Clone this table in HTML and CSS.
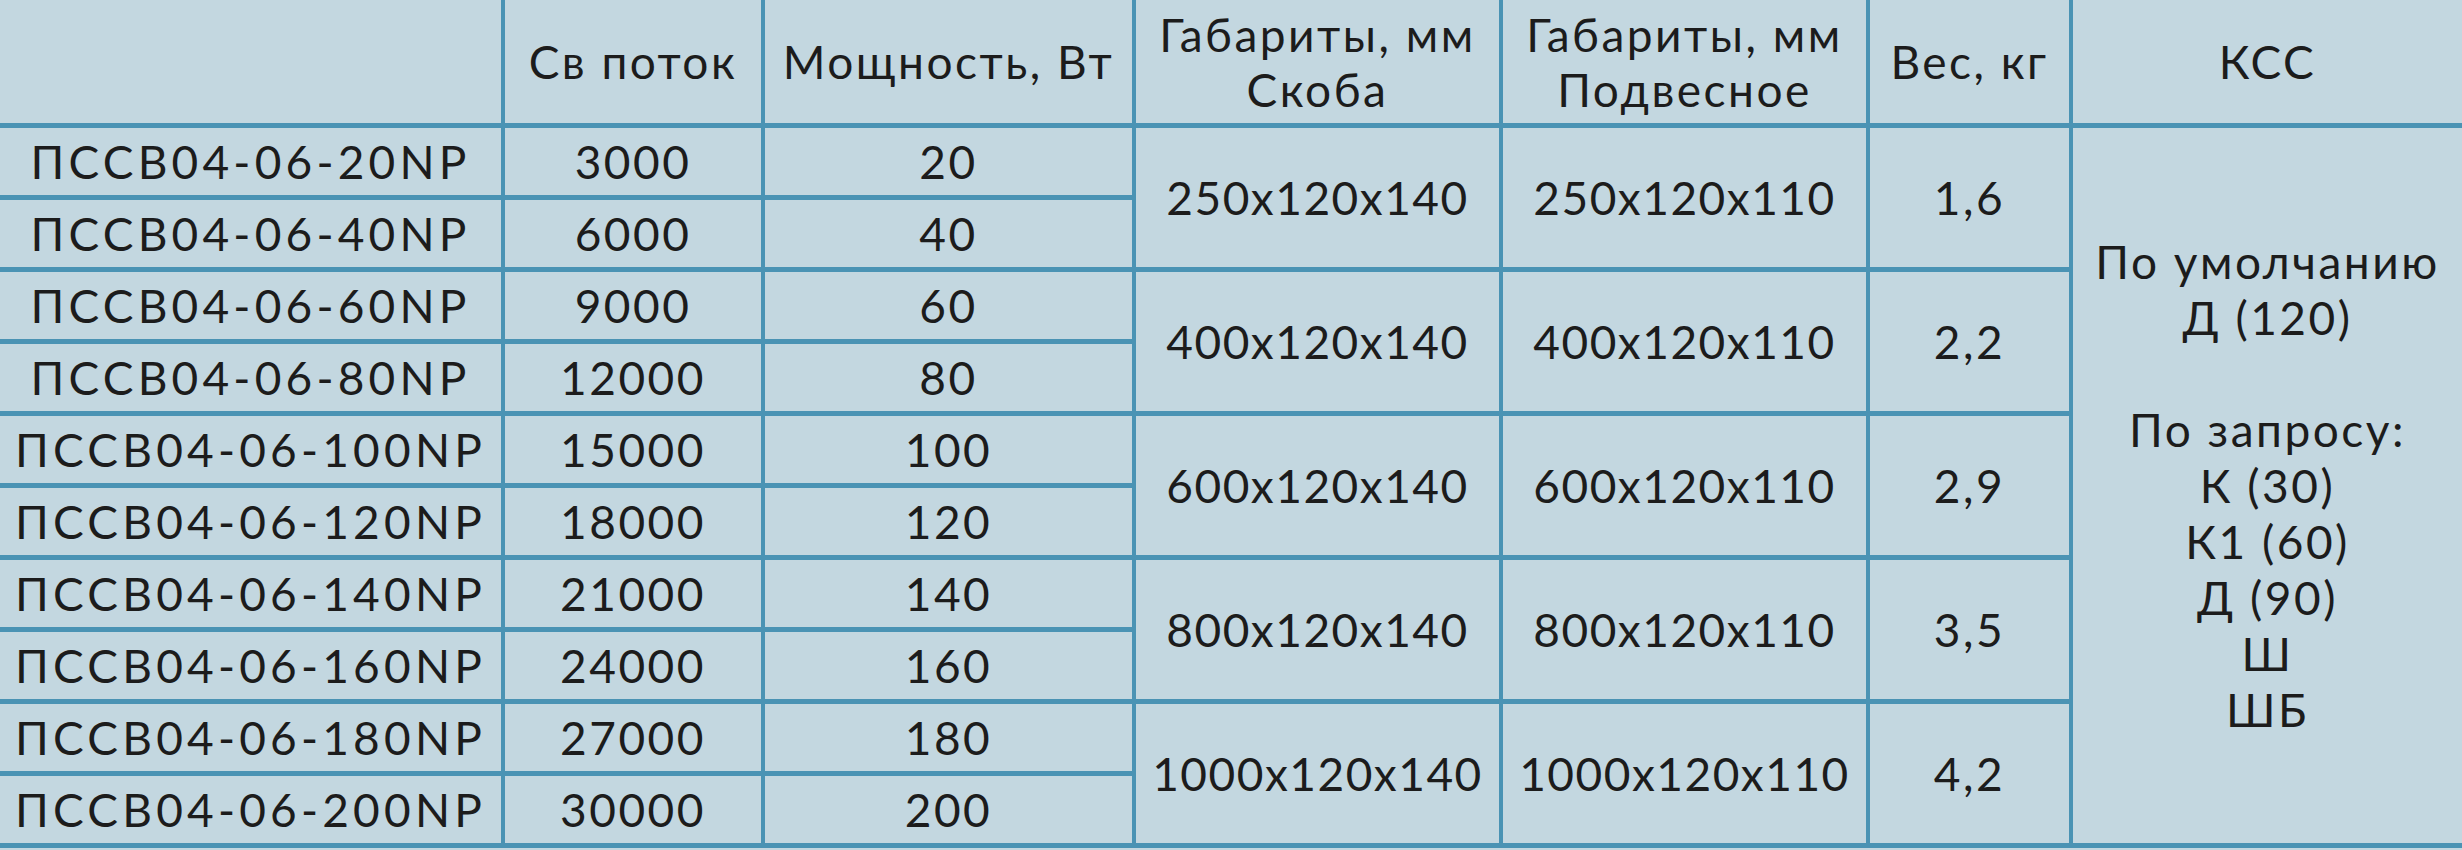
FILE: index.html
```html
<!DOCTYPE html>
<html lang="ru">
<head>
<meta charset="utf-8">
<title>ПССВ04-06</title>
<link rel="stylesheet" href="styles.css">
</head>
<body>
<table class="spec">
  <colgroup>
    <col class="c-name">
    <col class="c-flux">
    <col class="c-power">
    <col class="c-dim">
    <col class="c-dim2">
    <col class="c-weight">
    <col class="c-kss">
  </colgroup>
  <thead>
    <tr class="head">
      <th></th>
      <th>Св поток</th>
      <th>Мощность, Вт</th>
      <th>Габариты, мм<br>Скоба</th>
      <th>Габариты, мм<br>Подвесное</th>
      <th>Вес, кг</th>
      <th>КСС</th>
    </tr>
  </thead>
  <tbody>
    <tr>
      <td class="name">ПССВ04-06-20NP</td>
      <td>3000</td>
      <td>20</td>
      <td rowspan="2" class="dim">250x120x140</td>
      <td rowspan="2" class="dim">250x120x110</td>
      <td rowspan="2">1,6</td>
      <td rowspan="10" class="kss">По умолчанию<br>Д (120)<br><br>По запросу:<br>К (30)<br>К1 (60)<br>Д (90)<br>Ш<br>ШБ</td>
    </tr>
    <tr>
      <td class="name">ПССВ04-06-40NP</td>
      <td>6000</td>
      <td>40</td>
    </tr>
    <tr>
      <td class="name">ПССВ04-06-60NP</td>
      <td>9000</td>
      <td>60</td>
      <td rowspan="2" class="dim">400x120x140</td>
      <td rowspan="2" class="dim">400x120x110</td>
      <td rowspan="2">2,2</td>
    </tr>
    <tr>
      <td class="name">ПССВ04-06-80NP</td>
      <td>12000</td>
      <td>80</td>
    </tr>
    <tr>
      <td class="name">ПССВ04-06-100NP</td>
      <td>15000</td>
      <td>100</td>
      <td rowspan="2" class="dim">600x120x140</td>
      <td rowspan="2" class="dim">600x120x110</td>
      <td rowspan="2">2,9</td>
    </tr>
    <tr>
      <td class="name">ПССВ04-06-120NP</td>
      <td>18000</td>
      <td>120</td>
    </tr>
    <tr>
      <td class="name">ПССВ04-06-140NP</td>
      <td>21000</td>
      <td>140</td>
      <td rowspan="2" class="dim">800x120x140</td>
      <td rowspan="2" class="dim">800x120x110</td>
      <td rowspan="2">3,5</td>
    </tr>
    <tr>
      <td class="name">ПССВ04-06-160NP</td>
      <td>24000</td>
      <td>160</td>
    </tr>
    <tr>
      <td class="name">ПССВ04-06-180NP</td>
      <td>27000</td>
      <td>180</td>
      <td rowspan="2" class="dim">1000x120x140</td>
      <td rowspan="2" class="dim">1000x120x110</td>
      <td rowspan="2">4,2</td>
    </tr>
    <tr>
      <td class="name">ПССВ04-06-200NP</td>
      <td>30000</td>
      <td>200</td>
    </tr>
  </tbody>
</table>
</body>
</html>
```

FILE: styles.css
```css
html, body {
  margin: 0;
  padding: 0;
  background: #c3d7e0;
}

.spec {
  width: 2462px;
  table-layout: fixed;
  border-collapse: collapse;
  border-spacing: 0;
  font-family: "Lato", "Liberation Sans", sans-serif;
  font-size: 46px;
  letter-spacing: 2.5px;
  line-height: 55px;
  color: #1c1c1c;
  background: #c3d7e0;
}

.c-name { width: 503px; }
.c-flux { width: 260px; }
.c-power { width: 371px; }
.c-dim { width: 367px; }
.c-dim2 { width: 367px; }
.c-weight { width: 203px; }
.c-kss { width: 391px; }

.spec th,
.spec td {
  padding: 0;
  text-align: center;
  vertical-align: middle;
  font-weight: 400;
  white-space: nowrap;
  border-left: 4px solid #4a93b4;
  border-right: 4px solid #4a93b4;
  border-top: 5px solid #4a93b4;
  border-bottom: 5px solid #4a93b4;
}

.spec tr > :first-child {
  border-left: none;
}

.spec tr > :last-child {
  border-right: none;
}

.spec tbody tr:first-child td.kss {
  border-right: none;
}

.spec thead th {
  border-top: none;
  height: 123px;
}

.spec tbody tr {
  height: 72px;
}

.spec td.name {
  letter-spacing: 4.2px;
}

.spec td.dim {
  letter-spacing: 1.5px;
}

.kss {
  line-height: 56px;
}
```
